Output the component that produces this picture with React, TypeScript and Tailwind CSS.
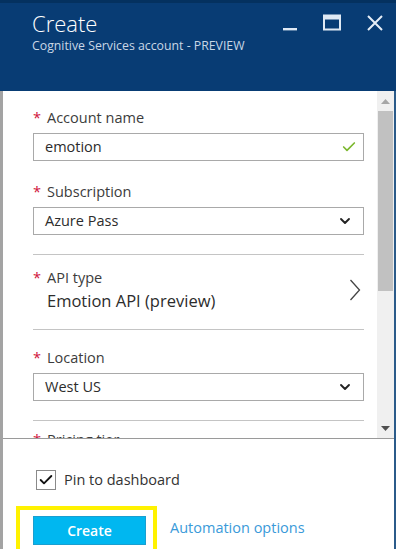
import { ChevronDown, Check } from "lucide-react";

const font = { fontFamily: '"Open Sans", "Noto Sans", sans-serif' };

function Label({ text }: { text: string }) {
  return (
    <div className="flex h-5 items-center text-[14.5px] leading-5 text-[#3c3c3c]">
      <span className="w-[14px] text-[#d0103a]">*</span>
      <span>{text}</span>
    </div>
  );
}

function Select({ value }: { value: string }) {
  return (
    <div className="flex h-[28px] items-center justify-between border border-[#a9a9a9] pr-[10px] pl-[11px] text-[14.5px] text-[#2c2c2c]">
      <span>{value}</span>
      <ChevronDown className="h-[16px] w-[16px] text-[#222]" strokeWidth={2.8} />
    </div>
  );
}

export default function App() {
  return (
    <div className="flex h-[549px] w-[396px] flex-col overflow-hidden bg-white" style={font}>
      <header className="flex h-[91px] shrink-0 justify-between border-t-[3px] border-[#04315f] bg-[#083c74] pl-[32px] pr-[12px]">
        <div className="pt-[6px]">
          <div className="text-[22px] font-light leading-[28px] text-white">Create</div>
          <div className="mt-[1px] text-[12.3px] leading-4 text-[#c9d7e6]">Cognitive Services account - PREVIEW</div>
        </div>
        <div className="flex items-start gap-[25px] pt-[11px] text-white">
          <svg width="16" height="18" viewBox="0 0 16 18" className="mt-[1px]">
            <rect x="1" y="13" width="14" height="2.4" fill="#dfe9f4" />
          </svg>
          <svg width="18" height="18" viewBox="0 0 18 18">
            <rect x="1" y="1.5" width="16" height="14" fill="none" stroke="#dfe9f4" strokeWidth="2" />
            <rect x="1" y="1.5" width="16" height="4" fill="#dfe9f4" />
          </svg>
          <svg width="18" height="18" viewBox="0 0 18 18">
            <path d="M2 2 L16 16 M16 2 L2 16" stroke="#e6eef7" strokeWidth="2" />
          </svg>
        </div>
      </header>

      <div className="flex min-h-0 flex-1 flex-col border-l-[3px] border-r-[2px] border-l-[#a3a3a3] border-r-[#2b5b8a]">
        <div className="flex h-[348px] shrink-0 border-b border-[#9a9a9a]">
          <div className="min-w-0 flex-1 overflow-hidden pl-[30px] pr-[13px] pt-[17px]">
            <Label text="Account name" />
            <div className="mt-[5px] flex h-[28px] items-center justify-between border border-[#a9a9a9] pl-[11px] pr-[6px] text-[14.5px] text-[#2c2c2c]">
              <span>emotion</span>
              <Check className="h-[16px] w-[16px] text-[#7cb82f]" strokeWidth={2.5} />
            </div>

            <div className="mt-[21px]">
              <Label text="Subscription" />
            </div>
            <div className="mt-[5px]">
              <Select value="Azure Pass" />
            </div>

            <div className="mt-[19px] border-t border-[#c4c4c4]" />

            <div className="flex items-center justify-between pt-[13px] pb-[17px]">
              <div>
                <Label text="API type" />
                <div className="ml-[14px] mt-[2px] text-[16.5px] leading-[22px] text-[#2c2c2c]">Emotion API (preview)</div>
              </div>
              <svg width="12" height="22" viewBox="0 0 12 22" className="mr-[3px]">
                <path d="M1.5 1 L10.5 11 L1.5 21" fill="none" stroke="#444" strokeWidth="1.3" />
              </svg>
            </div>

            <div className="border-t border-[#c4c4c4]" />

            <div className="mt-[18px]">
              <Label text="Location" />
            </div>
            <div className="mt-[5px]">
              <Select value="West US" />
            </div>

            <div className="mt-[19px] border-t border-[#c4c4c4]" />

            <div className="mt-[9px]">
              <Label text="Pricing tier" />
            </div>
          </div>

          <div className="flex w-[17px] shrink-0 flex-col bg-[#f0f0f0]">
            <div className="flex h-[20px] items-center justify-center">
              <svg width="9" height="5" viewBox="0 0 9 5">
                <path d="M0 5 L4.5 0 L9 5 Z" fill="#a6a6a6" />
              </svg>
            </div>
            <div className="mx-[1px] h-[180px] bg-[#c1c1c1]" />
            <div className="flex-1" />
            <div className="flex h-[20px] items-center justify-center">
              <svg width="9" height="5" viewBox="0 0 9 5">
                <path d="M0 0 L9 0 L4.5 5 Z" fill="#505050" />
              </svg>
            </div>
          </div>
        </div>

        <div className="flex-1 pl-[13px] pt-[30px]">
          <div className="ml-[20px] flex items-center gap-[8px]">
            <div className="flex h-[20px] w-[20px] items-center justify-center border border-[#8a8a8a]">
              <Check className="h-[16px] w-[16px] text-[#111]" strokeWidth={2.8} />
            </div>
            <span className="text-[14.5px] text-[#333]">Pin to dashboard</span>
          </div>

          <div className="mt-[15px] flex items-center gap-[13px]">
            <div className="h-[48px] w-[141px] border-[4px] border-[#fff200] pl-[13px] pt-[6px]">
              <button className="h-[29px] w-[113px] border border-[#1a9fd0] bg-[#00b7f0] text-[14px] font-semibold text-white">
                Create
              </button>
            </div>
            <span className="-mt-[4px] text-[14.5px] text-[#3a9ad9]">Automation options</span>
          </div>
        </div>
      </div>
    </div>
  );
}
